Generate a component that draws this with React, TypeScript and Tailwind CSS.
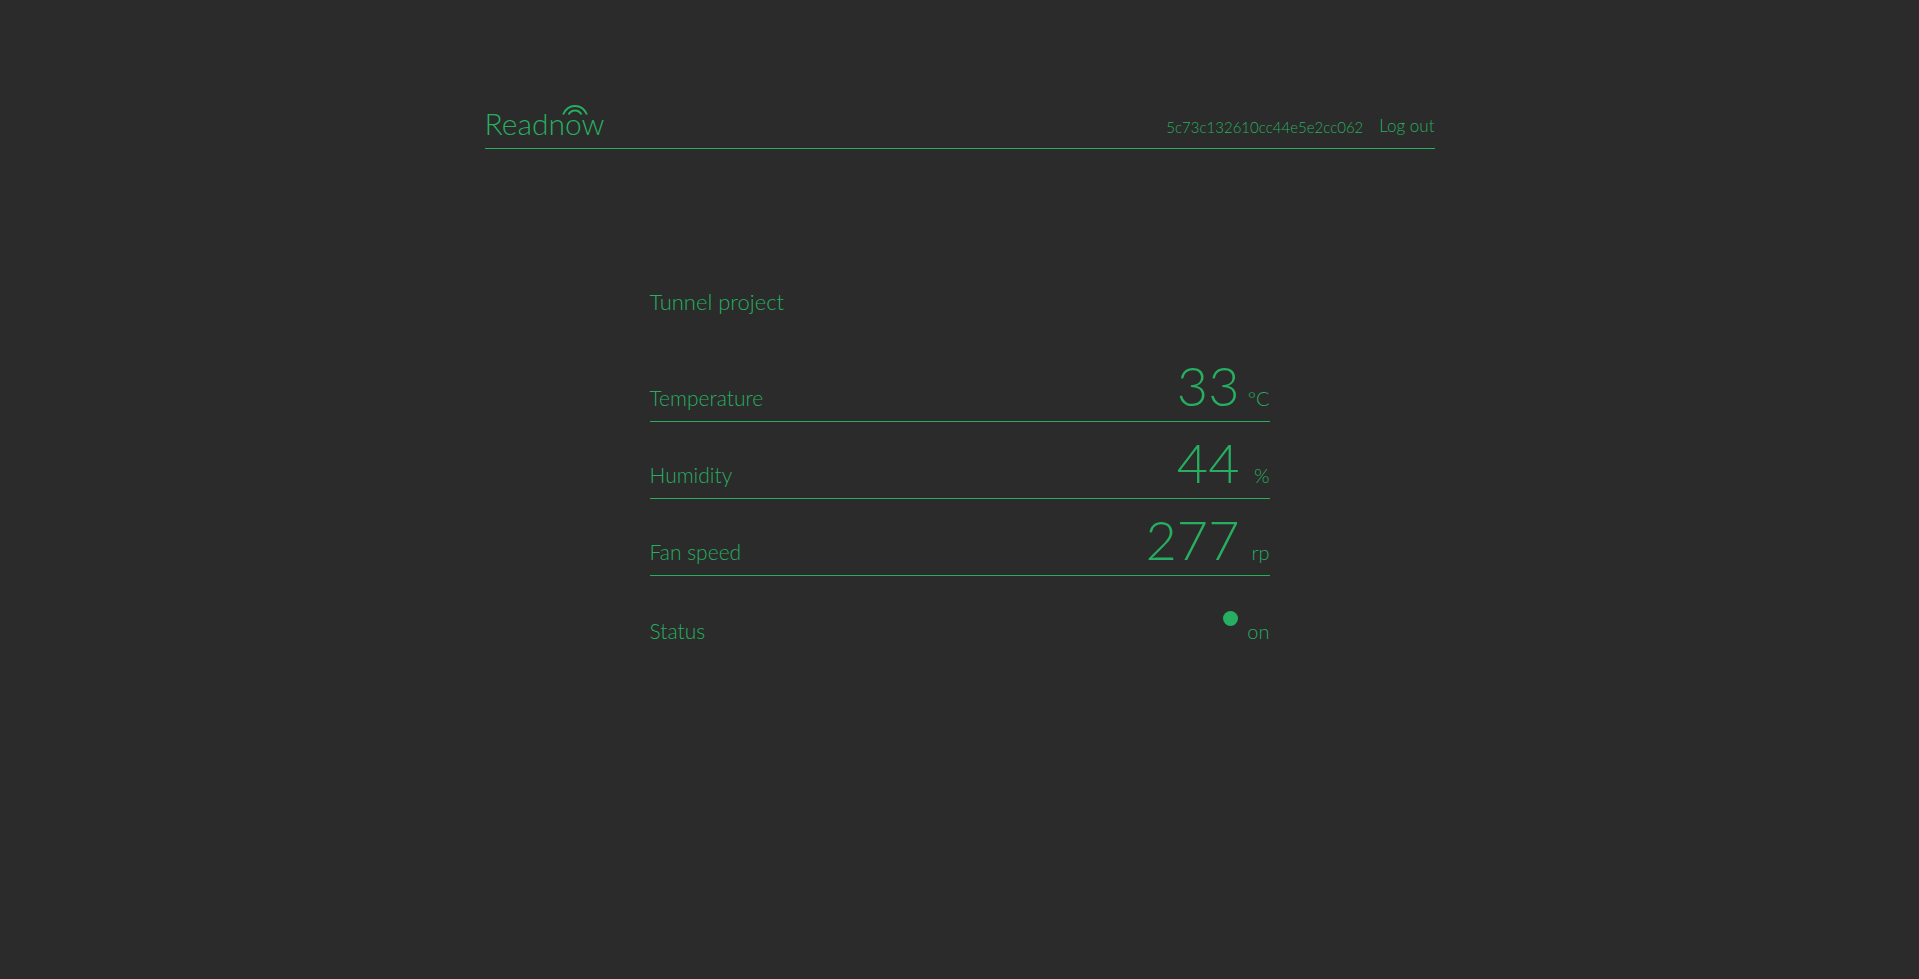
import React from "react";

type Reading = { label: string; value: string; unit: string };

const readings: Reading[] = [
  { label: "Temperature", value: "33", unit: "°C" },
  { label: "Humidity", value: "44", unit: "%" },
  { label: "Fan speed", value: "277", unit: "rp" },
];

function Logo() {
  return (
    <a href="#" aria-label="Readnow" className="relative text-[30px] leading-8">
      Readnow
      <svg
        className="absolute -top-0.5 right-4"
        width="26"
        height="10"
        viewBox="0 0 26 10"
        fill="none"
        stroke="currentColor"
        strokeWidth="1.8"
        aria-hidden="true"
      >
        <path d="M1 9.500C3.500 4 8 1 13 1s9.500 3 12 8.500" />
        <path d="M6.500 9.500C8 6.800 10.300 5.500 13 5.500s5 1.300 6.500 4" />
      </svg>
    </a>
  );
}

function Row({ reading }: { reading: Reading }) {
  return (
    <div className="flex items-baseline border-b border-[#27ae60] pt-[9px] pb-[3px]">
      <dt className="grow">{reading.label}</dt>
      <dd className="flex items-baseline">
        <span className="text-[54px] leading-16">{reading.value}</span>
        <span className="w-[30px] text-right text-xl leading-6">{reading.unit}</span>
      </dd>
    </div>
  );
}

export default function App() {
  return (
    <div className="min-h-screen bg-[#2b2b2b] px-4 pt-[107px] font-['Lato',sans-serif] font-light text-[#27ae60]">
      <header className="mx-auto flex max-w-[950px] items-end justify-between border-b border-[#27ae60] pb-[9px]">
        <Logo />
        <div className="flex items-end gap-4 leading-6">
          <span className="text-[15px]">5c73c132610cc44e5e2cc062</span>
          <button type="button" className="pb-px text-[17px]">
            Log out
          </button>
        </div>
      </header>
      <main className="mx-auto max-w-[620px] pt-[137px]">
        <h1 className="text-[22px] leading-8">Tunnel project</h1>
        <dl className="pt-[27px] text-[21px] leading-6">
          {readings.map((reading) => (
            <Row key={reading.label} reading={reading} />
          ))}
          <div className="flex items-end justify-between pt-[35px]">
            <dt>Status</dt>
            <dd className="flex items-start gap-[9px]">
              <span className="size-[15px] rounded-full bg-[#27ae60]" />
              <span className="pt-2 text-xl leading-6">on</span>
            </dd>
          </div>
        </dl>
      </main>
    </div>
  );
}
